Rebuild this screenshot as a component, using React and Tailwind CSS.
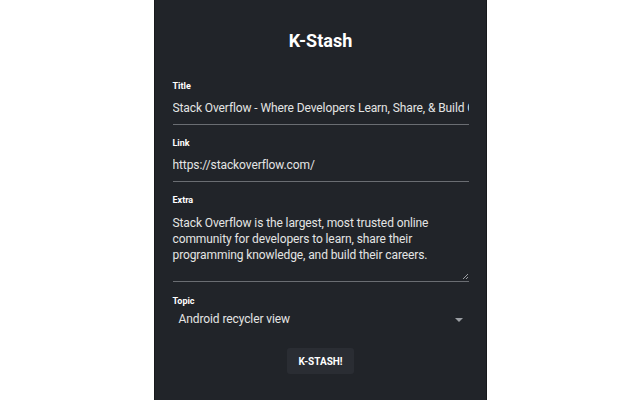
export default function App() {
  const font = { fontFamily: "Roboto, 'Liberation Sans', sans-serif" };
  return (
    <div className="w-[640px] h-[400px] bg-white flex justify-center overflow-hidden" style={font}>
      <div className="w-[333px] h-[400px] bg-[#212429] border-x border-[#17191c] pl-[18px] pr-[17px] flex flex-col">
        <h1 className="mt-[29px] text-center text-[18px] leading-[24px] font-bold text-white">K-Stash</h1>
        <div className="mt-[27px] flex flex-col">
          <label className="text-[9px] leading-[12px] font-bold text-white">Title</label>
          <div className="mt-[7px] text-[12px] tracking-[-0.1px] leading-[18px] text-[#e4e4e4] whitespace-nowrap overflow-hidden pb-[7px] border-b border-[#6a6d72]">
            Stack Overflow - Where Developers Learn, Share, &amp; Build Careers
          </div>
        </div>
        <div className="mt-[12px] flex flex-col">
          <label className="text-[9px] leading-[12px] font-bold text-white">Link</label>
          <div className="mt-[7px] text-[12px] tracking-[-0.1px] leading-[18px] text-[#e4e4e4] whitespace-nowrap overflow-hidden pb-[7px] border-b border-[#6a6d72]">
            https://stackoverflow.com/
          </div>
        </div>
        <div className="mt-[12px] flex flex-col">
          <label className="text-[9px] leading-[12px] font-bold text-white">Extra</label>
          <div className="relative mt-[9px] h-[67px] text-[12px] tracking-[-0.1px] leading-[16px] text-[#e4e4e4] border-b border-[#6a6d72] pr-[30px]">
            Stack Overflow is the largest, most trusted online community for developers to learn, share their programming knowledge, and build their careers.
            <svg className="absolute right-[1px] bottom-[2px]" width="6" height="6" viewBox="0 0 6 6">
              <path d="M6 1 L1 6 M6 4 L4 6" stroke="#9a9da2" strokeWidth="1" />
            </svg>
          </div>
        </div>
        <div className="mt-[13px] flex flex-col">
          <label className="text-[9px] leading-[12px] font-bold text-white">Topic</label>
          <div className="mt-[3px] flex items-center justify-between pl-[6px] pr-[6px]">
            <span className="text-[12px] tracking-[-0.1px] leading-[18px] text-[#e4e4e4]">Android recycler view</span>
            <svg width="8" height="5" viewBox="0 0 8 5" className="mt-[3px]">
              <path d="M0 0 L8 0 L4 4 Z" fill="#9a9da2" />
            </svg>
          </div>
        </div>
        <div className="mt-[20px] flex justify-center">
          <button className="w-[67px] h-[26px] rounded-[3px] bg-[#2a2d33] text-[10px] font-bold text-white">K-STASH!</button>
        </div>
      </div>
    </div>
  );
}
